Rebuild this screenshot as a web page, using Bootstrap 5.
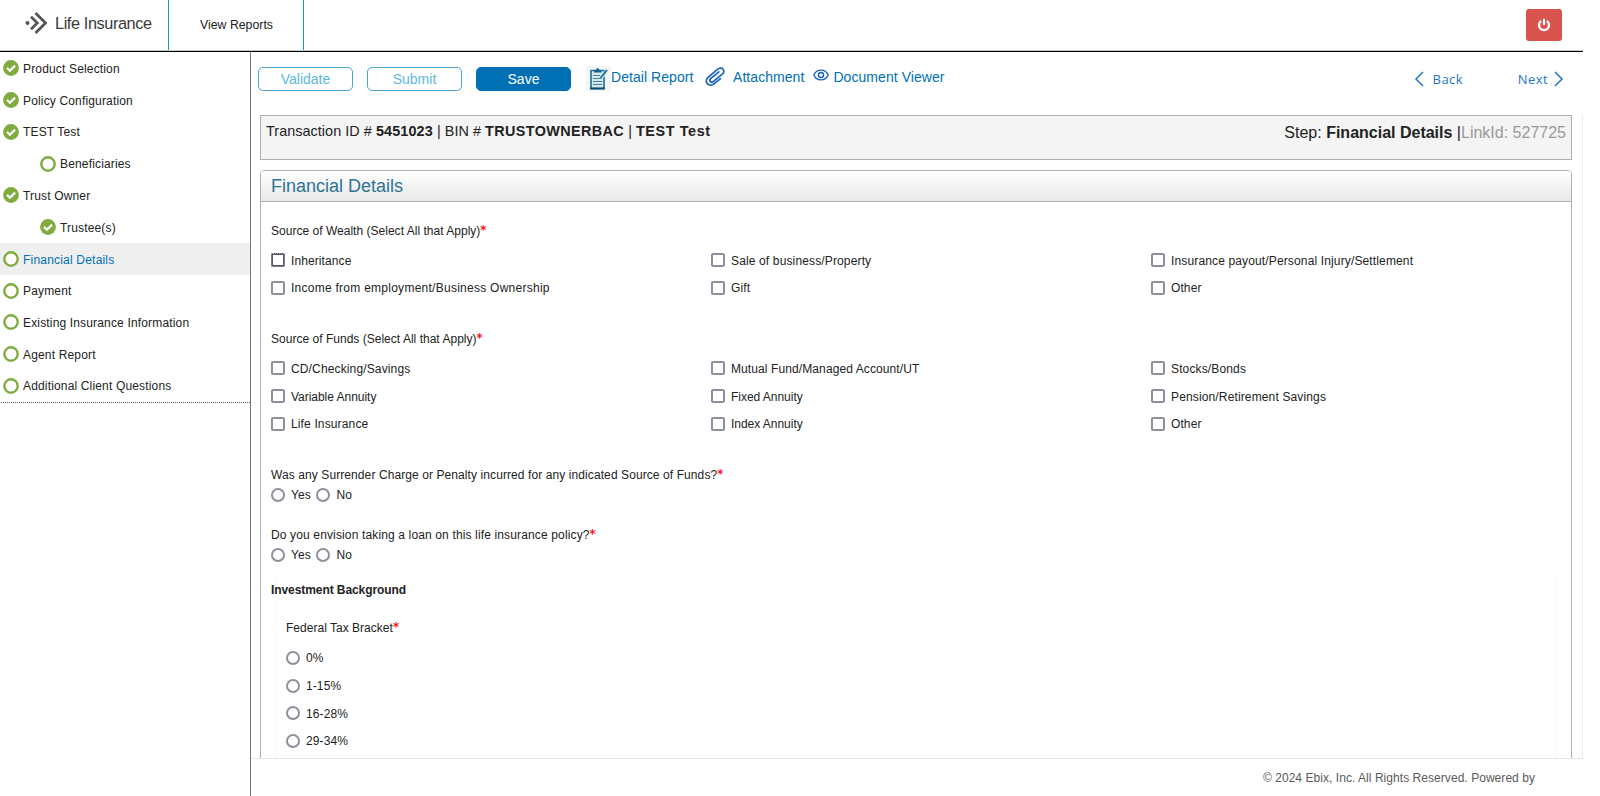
<!DOCTYPE html>
<html lang="en">
<head>
<meta charset="utf-8">
<title>Life Insurance - Financial Details</title>
<link rel="stylesheet" href="https://cdn.jsdelivr.net/npm/bootstrap@5.3.0/dist/css/bootstrap.min.css">
<style>
body{font-family:"Liberation Sans",Arial,sans-serif;font-size:12px;line-height:20px;color:#222;background:#fff;height:796px;overflow:hidden}
a{text-decoration:none;color:inherit}
.topbar{width:1583px;height:52px;border-bottom:1px solid #000;box-shadow:inset 0 -1px #c9c9c9}
.brand-cell{width:169px;border-right:1px solid #1e96d3;height:50px;padding:0 0 5px 25px;gap:8px}
.brand-cell span{font-size:16.3px;color:#3a3a3a;letter-spacing:-.4px}
.reports-cell{width:135px;border-right:1px solid #1e96d3;height:50px;font-size:12.3px;letter-spacing:0;padding-left:1px}
.power{width:36px;height:32px;background:#d9534f;border-radius:3px;margin:9px 21px 0 0}
.side{width:251px;border-right:1px solid #777;height:744px}
.steps{border-bottom:1px dotted #555;margin:0 0 0 1px;padding-top:.5px}
.step{height:31.76px;margin-left:-1px;padding-left:3px;gap:4px;letter-spacing:.16px}
.step span{padding-top:1px}
.step.sub{padding-left:40px}
.step.now{background:#efefef;color:#0070b8;letter-spacing:.2px}
.step.now span{padding-top:2px}
.step svg{width:16px;height:16px;flex:none}
.tools{height:62px;padding:15px 0 0 7px;font-size:14px}
.tbtn{width:95px;height:24px;border:1px solid #4ba3d6;border-radius:5px;color:#5bb9dc;line-height:23px;text-align:center;margin-right:14px;padding:0;background:#fff;font-size:14px}
.tbtn.save{background:#0070b4;border-color:#0070b4;color:#fff;margin-right:15px}
.tlink{color:#0070b4;height:20px;letter-spacing:.06px}
.nav-step{font-family:"Open Sans",sans-serif;font-size:13px;color:#2374c4;letter-spacing:.4px;height:24px}
.work{width:1332px;height:645px;border-right:1px solid #eee;border-bottom:1px solid #e6e6e6;padding:1px 10px 0 9px;overflow:hidden}
.infobar{height:45px;background:#f4f4f4;border:1px solid #b0b0b0;padding:5px 5px 0;font-size:14.4px;letter-spacing:.05px}
.infobar .wide{letter-spacing:.38px}
.infobar .wider{letter-spacing:.6px}
.infobar .right{font-size:16px;padding-top:2px;letter-spacing:0}
.panel{margin-top:10px;height:640px;border:1px solid #b0b0b0;border-radius:4px 4px 0 0}
.panel-title{height:31px;border-bottom:1px solid #b0b0b0;background:linear-gradient(#fff,#e8e8e8);border-radius:3px 3px 0 0;font-size:18px;line-height:31px;color:#2f7396;padding-left:10px}
.panel-inner{padding:19px 0 0 10px}
.q{height:20px;letter-spacing:.02px}
.q i{color:#f11;font-style:normal;font-family:"DejaVu Sans",sans-serif;font-weight:700;font-size:11.5px;line-height:10px;letter-spacing:0;vertical-align:1px}
.ls1{letter-spacing:.09px}
.ls2{letter-spacing:.14px}
.trio{width:1320px;margin:5px 0 27px;display:grid;grid-template-columns:repeat(3,440px);grid-auto-rows:27.8px}
.trio.low{margin:6px 0 26px}
.opt{gap:6px;letter-spacing:.1px}
.opt span{padding-top:2px}
.opt .tight{letter-spacing:-.03px}
.opt .loose{letter-spacing:.26px}
.opt input{appearance:none;width:14px;height:14px;border:2px solid #8f8f9d;border-radius:2px;margin:0;background:#fff}
.opt input[type=radio]{border-radius:50%}
.opt input.focused{border-color:#555566;outline:1px dotted #a8a8b4;outline-offset:-1px}
.yn{height:20px}
.yn .opt{gap:6px;margin-right:5.5px}
.yn .opt span{padding:0}
.bracket{margin-left:4px;border-left:1px solid #fafafa;border-right:1px solid #fafafa;width:1282px;height:200px;padding-left:10px;margin-top:10px}
.bracket .opt{height:27.7px}
.bracket h6{font-size:12px;line-height:20px;letter-spacing:-.08px;margin:0 0 18px -15px;padding-top:5px}
.foot{height:37px;padding:9px 48px 0 0;color:#5a5a5a;text-align:right;letter-spacing:.05px}
</style>
</head>
<body>
<header class="topbar d-flex">
  <a class="brand-cell d-flex align-items-center" href="#">
    <svg width="22" height="24" viewBox="0 0 22 24" fill="none" stroke="#555" stroke-width="2.700"><circle cx="2.500" cy="12" r="2" fill="#555" stroke="none"/><path d="M6 5.800l6.300 6.200L6 18.200"/><path d="M10.500 2l10 10-10 10"/></svg>
    <span>Life Insurance</span>
  </a>
  <a class="reports-cell d-flex align-items-center justify-content-center" href="#">View Reports</a>
  <button class="power btn p-0 border-0 ms-auto d-flex align-items-center justify-content-center" aria-label="Log out">
    <svg width="14" height="14" viewBox="0 0 14 14" fill="none" stroke="#fff" stroke-width="2.200"><path d="M7 .8v6"/><path d="M4.100 3a5 5 0 1 0 5.800 0"/></svg>
  </button>
</header>
<svg class="d-none">
  <symbol id="done" viewBox="0 0 16 16"><circle cx="8" cy="8" r="7.900" fill="#7fab3f"/><path d="M4 7.900l2.900 2.900 5.200-5.200" fill="none" stroke="#fff" stroke-width="2.200"/></symbol>
  <symbol id="todo" viewBox="0 0 16 16"><circle cx="8" cy="8" r="6.700" fill="#fff" stroke="#7fab3f" stroke-width="2.400"/></symbol>
</svg>
<div class="d-flex">
  <aside class="side flex-shrink-0">
    <nav class="steps">
      <a class="step d-flex align-items-center" href="#"><svg><use href="#done"/></svg><span>Product Selection</span></a>
      <a class="step d-flex align-items-center" href="#"><svg><use href="#done"/></svg><span>Policy Configuration</span></a>
      <a class="step d-flex align-items-center" href="#"><svg><use href="#done"/></svg><span>TEST Test</span></a>
      <a class="step sub d-flex align-items-center" href="#"><svg><use href="#todo"/></svg><span>Beneficiaries</span></a>
      <a class="step d-flex align-items-center" href="#"><svg><use href="#done"/></svg><span>Trust Owner</span></a>
      <a class="step sub d-flex align-items-center" href="#"><svg><use href="#done"/></svg><span>Trustee(s)</span></a>
      <a class="step now d-flex align-items-center" href="#"><svg><use href="#todo"/></svg><span>Financial Details</span></a>
      <a class="step d-flex align-items-center" href="#"><svg><use href="#todo"/></svg><span>Payment</span></a>
      <a class="step d-flex align-items-center" href="#"><svg><use href="#todo"/></svg><span>Existing Insurance Information</span></a>
      <a class="step d-flex align-items-center" href="#"><svg><use href="#todo"/></svg><span>Agent Report</span></a>
      <a class="step d-flex align-items-center" href="#"><svg><use href="#todo"/></svg><span>Additional Client Questions</span></a>
    </nav>
  </aside>
  <main style="width:1332px">
    <div class="tools d-flex align-items-start">
      <button class="tbtn">Validate</button><button class="tbtn">Submit</button><button class="tbtn save">Save</button>
      <a class="tlink d-flex" href="#">
        <svg width="25" height="25" viewBox="0 0 25 25" style="margin-top:-1px"><path fill="#f3f5f6" d="M0 0h25v25H0z"/><path d="M5 4.500h13v18H5z" fill="#d3e8ee" stroke="#2a7396" stroke-width="1.700"/><path d="M4.200 22.500h14.600" stroke="#0f4d72" stroke-width="2"/><path d="M8 6.500V4h2a1.700 1.700 0 0 1 3.400 0h2v2.500z" fill="#17638b"/><path d="M7 9.500h7M7 12.500h8M7 15.500h9M7 18.500h9" stroke="#4b8299" stroke-width="1.100"/><path d="M15 11.500l6.500-7.500" stroke="#f3f5f6" stroke-width="4"/><path d="M14.500 12l6.500-8" stroke="#2b7ea6" stroke-width="2.200"/></svg><span>Detail Report</span></a>
      <a class="tlink d-flex" href="#" style="margin-left:10.500px">
        <svg width="22" height="20" viewBox="0 0 22 20" fill="none" stroke="#1763bd" stroke-width="1.700" stroke-linecap="round"><path d="M16.500 11.700l-6.300 5c-2 1.600-5 1.900-6.700.2-1.900-1.900-1.400-4.800.6-6.600L13.500 2.400c1.700-1.400 4.300-1.800 5.600-.2 1.400 1.600.8 3.700-.8 5l-8.800 7.200c-1 .8-2.500 1-3.300 0-.7-1-.2-2.300.7-3.100l8-6.500"/></svg><span style="margin-left:7px">Attachment</span></a>
      <a class="tlink d-flex" href="#" style="margin-left:9px">
        <svg width="16" height="12" viewBox="0 0 16 12" fill="none" stroke="#1763bd" stroke-width="1.400" style="margin-top:2px"><path d="M.8 6C3.700-.5 12.300-.5 15.200 6c-2.900 6.500-11.500 6.500-14.400 0z"/><circle cx="8" cy="6" r="2.500"/></svg><span style="margin-left:4px">Document Viewer</span></a>
      <a class="nav-step ms-auto d-flex align-items-center" href="#"><svg width="10" height="16" viewBox="0 0 10 16" fill="none" stroke="currentColor" stroke-width="1.500" style="margin-right:9px"><path d="M9 1L2 8l7 7"/></svg>Back</a>
      <a class="nav-step d-flex align-items-center" href="#" style="margin:0 19px 0 55px">Next<svg width="10" height="16" viewBox="0 0 10 16" fill="none" stroke="currentColor" stroke-width="1.500" style="margin-left:6px"><path d="M1 1l7 7-7 7"/></svg></a>
    </div>
    <section class="work">
      <div class="infobar d-flex justify-content-between">
        <div>Transaction ID # <b class="ls2">5451023</b> | BIN # <b class="wide">TRUSTOWNERBAC</b> | <b class="wider">TEST Test</b></div>
        <div class="right">Step: <b>Financial Details</b> |<span style="color:#999">LinkId: 527725</span></div>
      </div>
      <div class="panel">
        <div class="panel-title">Financial Details</div>
        <div class="panel-inner">
          <div class="q">Source of Wealth (Select All that Apply)<i>*</i></div>
          <div class="trio">
            <label class="opt d-flex align-items-center"><input class="focused" type="checkbox"><span>Inheritance</span></label>
            <label class="opt d-flex align-items-center"><input type="checkbox"><span class="ls2">Sale of business/Property</span></label>
            <label class="opt d-flex align-items-center"><input type="checkbox"><span class="ls2">Insurance payout/Personal Injury/Settlement</span></label>
            <label class="opt d-flex align-items-center"><input type="checkbox"><span class="loose pt-0">Income from employment/Business Ownership</span></label>
            <label class="opt d-flex align-items-center"><input type="checkbox"><span class="pt-0">Gift</span></label>
            <label class="opt d-flex align-items-center"><input type="checkbox"><span class="pt-0">Other</span></label>
          </div>
          <div class="q">Source of Funds (Select All that Apply)<i>*</i></div>
          <div class="trio low">
            <label class="opt d-flex align-items-center"><input type="checkbox"><span class="ls2">CD/Checking/Savings</span></label>
            <label class="opt d-flex align-items-center"><input type="checkbox"><span>Mutual Fund/Managed Account/UT</span></label>
            <label class="opt d-flex align-items-center"><input type="checkbox"><span class="ls2">Stocks/Bonds</span></label>
            <label class="opt d-flex align-items-center"><input type="checkbox"><span class="tight">Variable Annuity</span></label>
            <label class="opt d-flex align-items-center"><input type="checkbox"><span class="tight">Fixed Annuity</span></label>
            <label class="opt d-flex align-items-center"><input type="checkbox"><span class="ls2">Pension/Retirement Savings</span></label>
            <label class="opt d-flex align-items-center"><input type="checkbox"><span class="pt-0 ls2">Life Insurance</span></label>
            <label class="opt d-flex align-items-center"><input type="checkbox"><span class="pt-0 tight">Index Annuity</span></label>
            <label class="opt d-flex align-items-center"><input type="checkbox"><span class="pt-0">Other</span></label>
          </div>
          <div style="padding-top:1px">
            <div class="q ls1">Was any Surrender Charge or Penalty incurred for any indicated Source of Funds?<i>*</i></div>
            <div class="yn d-flex">
              <label class="opt d-flex align-items-center"><input type="radio" name="penalty"><span>Yes</span></label>
              <label class="opt d-flex align-items-center"><input type="radio" name="penalty"><span>No</span></label>
            </div>
            <div class="q ls2" style="margin-top:20px">Do you envision taking a loan on this life insurance policy?<i>*</i></div>
            <div class="yn d-flex">
              <label class="opt d-flex align-items-center"><input type="radio" name="loan"><span>Yes</span></label>
              <label class="opt d-flex align-items-center"><input type="radio" name="loan"><span>No</span></label>
            </div>
          </div>
          <div class="bracket">
            <h6 class="fw-bold">Investment Background</h6>
            <div class="q" style="margin-bottom:6px">Federal Tax Bracket<i>*</i></div>
            <label class="opt d-flex align-items-center"><input type="radio" name="tax"><span class="pt-0">0%</span></label>
            <label class="opt d-flex align-items-center"><input type="radio" name="tax"><span class="pt-0">1-15%</span></label>
            <label class="opt d-flex align-items-center"><input type="radio" name="tax"><span>16-28%</span></label>
            <label class="opt d-flex align-items-center"><input type="radio" name="tax"><span class="pt-0">29-34%</span></label>
          </div>
        </div>
      </div>
    </section>
    <footer class="foot">© 2024 Ebix, Inc. All Rights Reserved. Powered by</footer>
  </main>
</div>
<script src="https://cdn.jsdelivr.net/npm/bootstrap@5.3.0/dist/js/bootstrap.bundle.min.js"></script>
</body>
</html>
